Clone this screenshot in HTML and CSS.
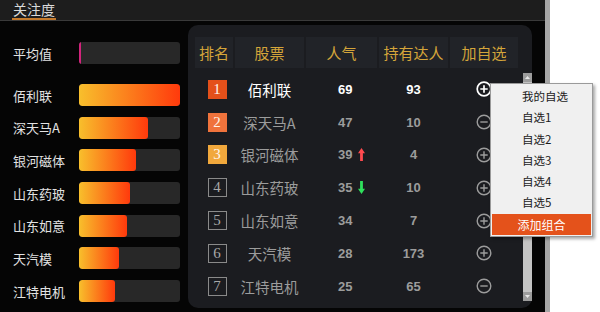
FILE: index.html
```html
<!DOCTYPE html>
<html lang="zh-CN">
<head>
    <meta charset="UTF-8">
    <title>关注度</title>
    <link rel="stylesheet" href="styles.css">
</head>
<body>
    <div class="page">
        <div class="widget">
            <div class="tabbar">
                <span class="tab">关注度</span>
            </div>

            <div class="content">
                <!-- attention bars -->
                <div class="bars">
                    <div class="bar-row avg">
                        <span class="bar-label">平均值</span>
                        <div class="track"><div class="fill avg-fill"></div></div>
                    </div>
                    <div class="bar-row">
                        <span class="bar-label">佰利联</span>
                        <div class="track"><div class="fill" style="width: 100%"></div></div>
                    </div>
                    <div class="bar-row">
                        <span class="bar-label">深天马A</span>
                        <div class="track"><div class="fill" style="width: 68%"></div></div>
                    </div>
                    <div class="bar-row">
                        <span class="bar-label">银河磁体</span>
                        <div class="track"><div class="fill" style="width: 56%"></div></div>
                    </div>
                    <div class="bar-row">
                        <span class="bar-label">山东药玻</span>
                        <div class="track"><div class="fill" style="width: 50%"></div></div>
                    </div>
                    <div class="bar-row">
                        <span class="bar-label">山东如意</span>
                        <div class="track"><div class="fill" style="width: 48%"></div></div>
                    </div>
                    <div class="bar-row">
                        <span class="bar-label">天汽模</span>
                        <div class="track"><div class="fill" style="width: 40%"></div></div>
                    </div>
                    <div class="bar-row">
                        <span class="bar-label">江特电机</span>
                        <div class="track"><div class="fill" style="width: 36%"></div></div>
                    </div>
                </div>

                <!-- ranking board -->
                <div class="board">
                    <div class="board-head">
                        <span>排名</span>
                        <span>股票</span>
                        <span>人气</span>
                        <span>持有达人</span>
                        <span>加自选</span>
                    </div>

                    <div class="board-body">
                        <div class="rows">
                            <div class="row top">
                                <span class="rank"><i class="badge b1">1</i></span>
                                <span class="name">佰利联</span>
                                <span class="hot">69</span>
                                <span class="holders">93</span>
                                <span class="action"><svg class="op" viewBox="0 0 16 16"><circle cx="8" cy="8" r="6.8"/><path d="M4.3 8H11.7M8 4.3V11.7"/></svg></span>
                            </div>
                            <div class="row">
                                <span class="rank"><i class="badge b2">2</i></span>
                                <span class="name">深天马A</span>
                                <span class="hot">47</span>
                                <span class="holders">10</span>
                                <span class="action"><svg class="op" viewBox="0 0 16 16"><circle cx="8" cy="8" r="6.8"/><path d="M4.3 8H11.7"/></svg></span>
                            </div>
                            <div class="row">
                                <span class="rank"><i class="badge b3">3</i></span>
                                <span class="name">银河磁体</span>
                                <span class="hot">39<svg class="arrow up" viewBox="0 0 7 13"><path d="M3.5 0L7 5.2H4.9V13H2.1V5.2H0Z"/></svg></span>
                                <span class="holders">4</span>
                                <span class="action"><svg class="op" viewBox="0 0 16 16"><circle cx="8" cy="8" r="6.8"/><path d="M4.3 8H11.7M8 4.3V11.7"/></svg></span>
                            </div>
                            <div class="row">
                                <span class="rank"><i class="badge plain">4</i></span>
                                <span class="name">山东药玻</span>
                                <span class="hot">35<svg class="arrow down" viewBox="0 0 7 13"><path d="M3.5 13L7 7.8H4.9V0H2.1V7.8H0Z"/></svg></span>
                                <span class="holders">10</span>
                                <span class="action"><svg class="op" viewBox="0 0 16 16"><circle cx="8" cy="8" r="6.8"/><path d="M4.3 8H11.7M8 4.3V11.7"/></svg></span>
                            </div>
                            <div class="row">
                                <span class="rank"><i class="badge plain">5</i></span>
                                <span class="name">山东如意</span>
                                <span class="hot">34</span>
                                <span class="holders">7</span>
                                <span class="action"><svg class="op" viewBox="0 0 16 16"><circle cx="8" cy="8" r="6.8"/><path d="M4.3 8H11.7M8 4.3V11.7"/></svg></span>
                            </div>
                            <div class="row">
                                <span class="rank"><i class="badge plain">6</i></span>
                                <span class="name">天汽模</span>
                                <span class="hot">28</span>
                                <span class="holders">173</span>
                                <span class="action"><svg class="op" viewBox="0 0 16 16"><circle cx="8" cy="8" r="6.8"/><path d="M4.3 8H11.7M8 4.3V11.7"/></svg></span>
                            </div>
                            <div class="row">
                                <span class="rank"><i class="badge plain">7</i></span>
                                <span class="name">江特电机</span>
                                <span class="hot">25</span>
                                <span class="holders">65</span>
                                <span class="action"><svg class="op" viewBox="0 0 16 16"><circle cx="8" cy="8" r="6.8"/><path d="M4.3 8H11.7"/></svg></span>
                            </div>
                        </div>

                        <div class="scroll">
                            <span class="scroll-btn"><svg viewBox="0 0 9 9"><path d="M2 6L4.5 3L7 6Z"/></svg></span>
                            <span class="scroll-btn"><svg viewBox="0 0 9 9"><path d="M2 3L4.5 6L7 3Z"/></svg></span>
                        </div>
                    </div>
                </div>
            </div>
        </div>

        <!-- add-to-watchlist dropdown -->
        <div class="menu">
            <div class="menu-item">我的自选</div>
            <div class="menu-item">自选1</div>
            <div class="menu-item">自选2</div>
            <div class="menu-item">自选3</div>
            <div class="menu-item">自选4</div>
            <div class="menu-item">自选5</div>
            <div class="menu-item add">添加组合</div>
        </div>
    </div>
</body>
</html>
```

FILE: styles.css
```css
body {
    margin: 0;
    background: #fff;
    font-family: "Noto Sans CJK SC", "Noto Sans", sans-serif;
}

.page {
    position: relative;
    width: 600px;
    height: 312px;
    overflow: hidden;
}

.widget {
    width: 545px;
    height: 312px;
    background: #050505;
    border-right: 5px solid #a6a6a6;
    display: flex;
    flex-direction: column;
}

/* top tab bar */
.tabbar {
    height: 20px;
    background: #1d1d1d;
    border-bottom: 1px solid #3a3a3a;
    display: flex;
}

.tab {
    margin-left: 12px;
    padding: 0 1px;
    height: 18px;
    line-height: 18px;
    font-size: 14px;
    color: #dadada;
    border-bottom: 2px solid #c47a2c;
}

.content {
    display: flex;
    flex: 1;
}

/* left bar chart */
.bars {
    width: 188px;
    padding: 21px 0 0 13px;
    box-sizing: border-box;
}

.bar-row {
    display: flex;
    align-items: center;
    height: 22px;
    margin-bottom: 10.7px;
}

.bar-row.avg {
    margin-bottom: 20px;
}

.bar-label {
    width: 66px;
    font-size: 13px;
    color: #e2e2e2;
    white-space: nowrap;
}

.track {
    width: 101px;
    height: 22px;
    background: #282828;
    border-radius: 3px;
    overflow: hidden;
}

.fill {
    height: 100%;
    background: linear-gradient(90deg, #f8bf2c, #ff3a0c);
    border-radius: 3px;
}

.avg-fill {
    width: 2px;
    background: #d2247c;
    border-radius: 0;
}

/* ranking board */
.board {
    width: 344px;
    height: 283px;
    margin-top: 4px;
    background: #1b1c20;
    border-radius: 10px;
    padding: 12px 0 0 7px;
    box-sizing: border-box;
}

.board-head,
.row {
    display: grid;
    grid-template-columns: 38px 69px 71px 69px 68px;
    column-gap: 2px;
}

.board-head {
    height: 31px;
}

.board-head span {
    background: #212328;
    color: #d4a53a;
    font-size: 15px;
    display: flex;
    align-items: center;
    justify-content: center;
}

.board-body {
    display: flex;
    margin-top: 5px;
}

.rows {
    width: 323px;
}

.row {
    height: 32.8px;
    align-items: center;
    color: #9c9c9c;
}

.rank {
    display: flex;
    justify-content: center;
    padding-left: 6px;
}

.badge {
    width: 19px;
    height: 19px;
    box-sizing: border-box;
    font-style: normal;
    font-family: "Liberation Serif", "DejaVu Serif", serif;
    font-size: 15px;
    line-height: 19px;
    text-align: center;
    color: #fff4ea;
}

.b1 { background: #e4501a; }
.b2 { background: #f0733c; }
.b3 { background: #f1a83c; }

.badge.plain {
    border: 1px solid #8a8a8a;
    line-height: 17px;
    color: #a8a8a8;
}

.name {
    text-align: center;
    font-size: 14.5px;
}

.hot {
    padding-left: 32px;
    display: flex;
    align-items: center;
}

.hot,
.holders {
    font-family: "Liberation Sans", Arial, sans-serif;
    font-weight: bold;
    font-size: 13px;
}

.holders {
    text-align: center;
}

.arrow {
    width: 7px;
    height: 13px;
    margin-left: 6px;
}

.arrow.up { fill: #ff4a4f; }
.arrow.down { fill: #2fe05c; }

.action {
    display: flex;
    justify-content: center;
}

.op {
    width: 16px;
    height: 16px;
    fill: none;
    stroke: currentColor;
    stroke-width: 1.4;
}

.row.top {
    color: #fff;
}

.row.top .op {
    stroke-width: 1.7;
}

.scroll {
    width: 9px;
    height: 228px;
    margin-left: 5px;
    background: #c4c4c4;
    display: flex;
    flex-direction: column;
    justify-content: space-between;
}

.scroll-btn {
    height: 9px;
    background: #9c9c9c;
    display: flex;
}

.scroll-btn svg {
    width: 9px;
    height: 9px;
    fill: #e8e8e8;
}

/* dropdown */
.menu {
    position: absolute;
    left: 490px;
    top: 83px;
    width: 101px;
    padding-top: 2px;
    background: #f0f0f0;
    border: 1px solid #9a9a9a;
    box-shadow: 2px 2px 3px rgba(0, 0, 0, 0.35);
}

.menu-item {
    height: 21.3px;
    line-height: 21.3px;
    padding-left: 31px;
    font-size: 11.5px;
    color: #1b1b1b;
}

.menu-item.add {
    margin: 0 1px 1px;
    padding-left: 0;
    text-align: center;
    font-size: 12px;
    background: #e4521b;
    color: #fff;
}
```
